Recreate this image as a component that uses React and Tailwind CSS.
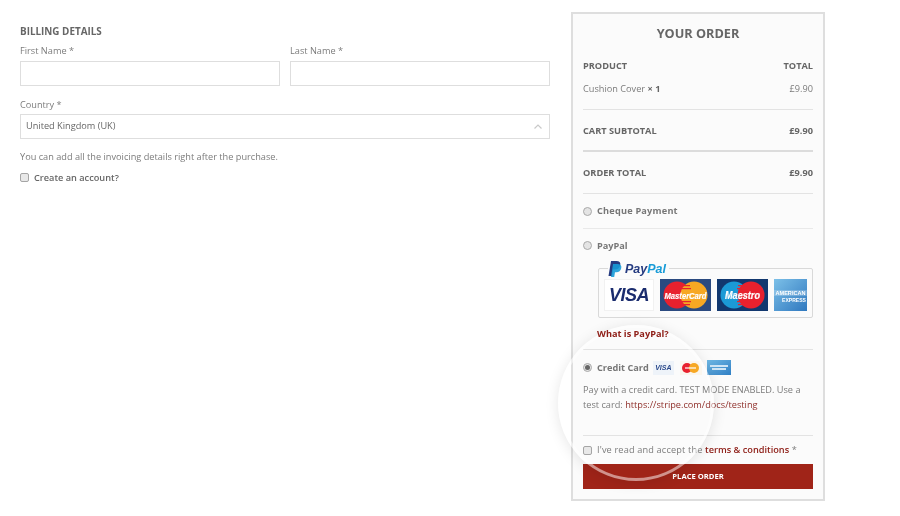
const F = "font-['Open_Sans',sans-serif]";

function Radio({ checked }) {
  return (
    <span className="w-[9px] h-[9px] rounded-full bg-[#e4e4e4] border border-[#a9a9a9] flex items-center justify-center shrink-0">
      {checked && <span className="w-[5px] h-[5px] rounded-full bg-[#666]" />}
    </span>
  );
}

function Check() {
  return <span className="w-[9px] h-[9px] rounded-[2px] bg-[#e8e8e8] border border-[#a5a5a5] shrink-0" />;
}

function Visa() {
  return (
    <div className="w-[50px] h-[32px] bg-white border border-[#f1f1f1] flex items-center justify-center">
      <span className="font-['Liberation_Sans',sans-serif] font-bold italic text-[18px] leading-none text-[#1a2c6e] tracking-[-0.5px]">VISA</span>
    </div>
  );
}

function Circles({ left, right, label, bg }) {
  return (
    <svg width="51" height="32" viewBox="0 0 51 32">
      <rect width="51" height="32" fill={bg} />
      <circle cx="17" cy="16" r="13.5" fill={left} />
      <circle cx="34" cy="16" r="13.5" fill={right} />
      <g fill="#e8212e">
        <rect x="21" y="6" width="9" height="1.2" />
        <rect x="20" y="9" width="11" height="1.2" />
        <rect x="20" y="22" width="11" height="1.2" />
        <rect x="21" y="25" width="9" height="1.2" />
      </g>
      <text x="25.5" y="19.5" textAnchor="middle" fontFamily="Liberation Sans, sans-serif" fontSize={label === "Maestro" ? 10.5 : 9} fontStyle="italic" fontWeight="700" fill="#fff" stroke="#fff" strokeWidth="0.2" textLength={label === "Maestro" ? 35 : 42} lengthAdjust="spacingAndGlyphs">{label}</text>
    </svg>
  );
}

function Amex() {
  return (
    <svg width="33" height="32" viewBox="0 0 33 32">
      <defs>
        <linearGradient id="ax" x1="0" y1="0" x2="1" y2="1">
          <stop offset="0" stopColor="#7cc0e8" />
          <stop offset="1" stopColor="#2f78bf" />
        </linearGradient>
      </defs>
      <rect width="33" height="32" fill="url(#ax)" />
      <rect x="0" y="11" width="33" height="6" fill="#fff" opacity="0.2" />
      <text x="1.5" y="16" fontFamily="Liberation Sans, sans-serif" fontSize="5" fontWeight="700" fill="#fff" textLength="30" lengthAdjust="spacingAndGlyphs">AMERICAN</text>
      <text x="8" y="22.5" fontFamily="Liberation Sans, sans-serif" fontSize="5" fontWeight="700" fill="#fff" textLength="24" lengthAdjust="spacingAndGlyphs">EXPRESS</text>
    </svg>
  );
}

function PayPalMark() {
  return (
    <svg width="14" height="16" viewBox="0 0 14 16">
      <path d="M3 0h5.5c2.8 0 4.3 1.5 3.8 4-.5 3-2.7 4.5-5.4 4.5H5L4 15H0.5z" fill="#253b80" />
      <path d="M5 3h4.5c2.6 0 4.3 1.4 3.8 4-.5 2.8-2.5 4.2-5 4.2H7L6.2 16H3z" fill="#179bd7" opacity="0.9" />
    </svg>
  );
}

function SmallCards() {
  return (
    <div className="flex items-center -ml-[1px]">
      <div className="w-[21px] h-[14px] bg-[#eef3f9] flex items-center justify-center">
        <span className="font-['Liberation_Sans',sans-serif] font-bold italic text-[7px] leading-none text-[#2b4a8c]">VISA</span>
      </div>
      <div className="ml-[6px] w-[22px] h-[14px] bg-[#fbf6ee] flex items-center justify-center">
        <svg width="17" height="10" viewBox="0 0 17 10">
          <circle cx="5" cy="5" r="5" fill="#e8212e" />
          <circle cx="12" cy="5" r="5" fill="#f7a823" />
          <rect x="3" y="4" width="11" height="2" fill="#fff" opacity="0.6" />
        </svg>
      </div>
      <div className="ml-[5px] w-[24px] h-[15px] bg-gradient-to-br from-[#6fb8e4] to-[#2f7fc4] flex flex-col items-center justify-center gap-[1px]">
        <span className="w-[18px] h-[2px] bg-[#cfe5f5]" />
        <span className="w-[14px] h-[2px] bg-[#cfe5f5]" />
      </div>
    </div>
  );
}

function Field({ label }) {
  return (
    <div className="flex-1">
      <div className="h-[17px] leading-[17px] text-[#7c7c7c]">{label}</div>
      <div className="h-[25px] mt-[2px] border border-[#dedede] bg-white" />
    </div>
  );
}

export default function App() {
  return (
    <div className={F + " relative w-[900px] h-[516px] bg-white overflow-hidden flex text-[#7a7a7a] text-[9.2px] blur-[0.3px]"}>
      <div className="w-[530px] ml-[20px] pt-[24px] shrink-0">
        <h3 className="h-[18px] text-[9.9px] leading-[15px] font-bold text-[#666]">BILLING DETAILS</h3>
        <div className="flex gap-[10px]">
          <Field label="First Name *" />
          <Field label="Last Name *" />
        </div>
        <div className="mt-[9px] h-[19px] leading-[19px] text-[#7c7c7c]">Country *</div>
        <div className="h-[25px] border border-[#dedede] bg-white flex items-center justify-between pl-[5px] pr-[6px] pb-[1px] text-[#666]">
          <span>United Kingdom (UK)</span>
          <svg width="8" height="5" viewBox="0 0 8 5" className="mr-[1px]" fill="none" stroke="#c9c9c9" strokeWidth="1.2">
            <path d="M0.5 4.5 4 1l3.5 3.5" />
          </svg>
        </div>
        <p className="mt-[10px] h-[15px] leading-[15px] text-[#7c7c7c]">You can add all the invoicing details right after the purchase.</p>
        <label className="mt-[6px] flex items-center gap-[4px] h-[15px]">
          <Check />
          <span className="font-semibold text-[#666] ml-[1px]">Create an account?</span>
        </label>
      </div>

      <div className="relative ml-[21px] mt-[12px] w-[254px] h-[489px] border-2 border-[#dedede] bg-[#fbfbfb] px-[10px] shrink-0 text-[#7c7c7c]">
        <h2 className="h-[38px] pt-[10px] text-center text-[12.7px] leading-[18px] font-bold text-[#666]">YOUR ORDER</h2>
        <div className="flex justify-between items-center h-[20px] font-bold text-[#666] mt-[4px]">
          <span>PRODUCT</span><span>TOTAL</span>
        </div>
        <div className="flex justify-between items-center h-[26px]">
          <span>Cushion Cover <b className="text-[#666]">× 1</b></span><span>£9.90</span>
        </div>
        <div className="h-[8px] border-b border-[#e3e3e3]" />
        <div className="flex justify-between items-center h-[42px] pt-[1px] font-bold text-[#666] border-b-2 border-[#dcdcdc]">
          <span>CART SUBTOTAL</span><span>£9.90</span>
        </div>
        <div className="flex justify-between items-center h-[42px] font-bold text-[#666] border-b border-[#e3e3e3]">
          <span>ORDER TOTAL</span><span>£9.90</span>
        </div>
        <div className="flex items-center gap-[5px] h-[35px] border-b border-[#e9e9e9] font-bold text-[#777]">
          <Radio /><span className="tracking-[0.2px]">Cheque Payment</span>
        </div>
        <div className="flex items-center gap-[5px] h-[33px] font-bold text-[#777]">
          <Radio /><span>PayPal</span>
        </div>
        <div className="relative ml-[15px] mt-[6px] h-[50px] border border-[#d9d9d9] rounded-[2px] flex items-start gap-[6px] pl-[5px] pt-[10px]">
          <div className="absolute -top-[8px] left-[9px] flex items-center gap-[3px] bg-[#fbfbfb] pr-[3px]">
            <PayPalMark />
            <span className="font-['Liberation_Sans',sans-serif] font-bold italic text-[12.5px] leading-none"><span className="text-[#253b80]">Pay</span><span className="text-[#179bd7]">Pal</span></span>
          </div>
          <Visa />
          <Circles left="#e8212e" right="#f7a823" label="MasterCard" bg="#2b4a80" />
          <Circles left="#1b9ad6" right="#e8212e" label="Maestro" bg="#12386f" />
          <Amex />
        </div>
        <div className="relative z-10 ml-[14px] mt-[8px] h-[16px] leading-[16px] font-bold text-[#8f2019]">What is PayPal?</div>
        <div className="h-[8px] border-b border-[#e3e3e3]" />
        <div className="flex items-center gap-[5px] h-[35px] font-bold text-[#777]">
          <Radio checked /><span>Credit Card</span><SmallCards />
        </div>
        <p className="leading-[15px] h-[30px] mt-[-3px]">
          Pay with a credit card. TEST MODE ENABLED. Use a test card: <span className="text-[#8f2f2a]">https://stripe.com/docs/testing</span>
        </p>
        <div className="h-[24px] border-b border-[#e3e3e3]" />
        <label className="flex items-center gap-[5px] h-[28px]">
          <Check />
          <span className="font-medium tracking-[0.15px]">I've read and accept the <b className="font-semibold text-[#8f2019] tracking-normal">terms &amp; conditions</b> *</span>
        </label>
        <button className="block w-full h-[25px] bg-[#a02418] text-white text-[7.6px] font-bold text-center">PLACE ORDER</button>
      </div>

      <div className="absolute left-[558px] top-[325px] w-[156px] h-[156px] rounded-full border-[3px] border-white/50 shadow-[0_2px_14px_rgba(0,0,0,0.10)] pointer-events-none" />
    </div>
  );
}
